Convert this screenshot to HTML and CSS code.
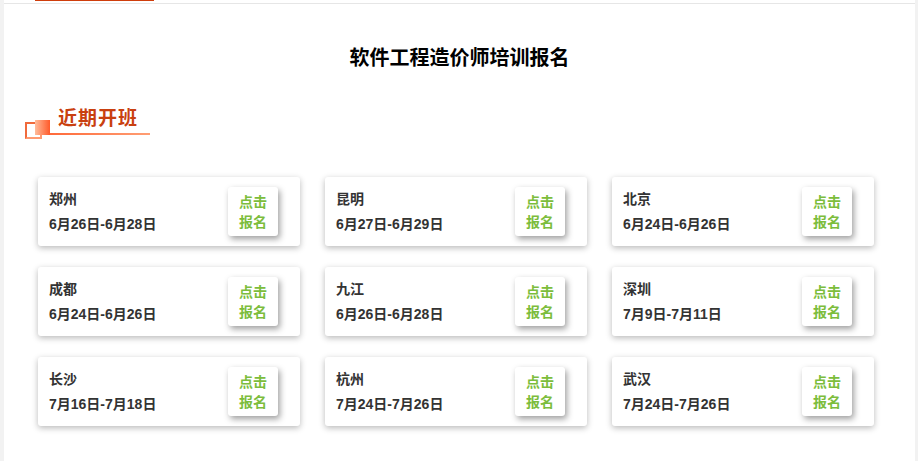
FILE: index.html
```html
<!DOCTYPE html>
<html lang="zh-CN">
<head>
<meta charset="utf-8">
<title>软件工程造价师培训报名</title>
<link rel="stylesheet" href="styles.css">
</head>
<body>
<div class="page">
  <div class="tabs"><span class="tab-active"></span></div>
  <h1 class="title">软件工程造价师培训报名</h1>
  <div class="section-head"><span class="section-text">近期开班</span></div>
  <div class="grid">
    <div class="card"><div class="info"><div class="city">郑州</div><div class="date">6月26日-6月28日</div></div><a class="btn">点击<br>报名</a></div>
    <div class="card"><div class="info"><div class="city">昆明</div><div class="date">6月27日-6月29日</div></div><a class="btn">点击<br>报名</a></div>
    <div class="card"><div class="info"><div class="city">北京</div><div class="date">6月24日-6月26日</div></div><a class="btn">点击<br>报名</a></div>
    <div class="card"><div class="info"><div class="city">成都</div><div class="date">6月24日-6月26日</div></div><a class="btn">点击<br>报名</a></div>
    <div class="card"><div class="info"><div class="city">九江</div><div class="date">6月26日-6月28日</div></div><a class="btn">点击<br>报名</a></div>
    <div class="card"><div class="info"><div class="city">深圳</div><div class="date">7月9日-7月11日</div></div><a class="btn">点击<br>报名</a></div>
    <div class="card"><div class="info"><div class="city">长沙</div><div class="date">7月16日-7月18日</div></div><a class="btn">点击<br>报名</a></div>
    <div class="card"><div class="info"><div class="city">杭州</div><div class="date">7月24日-7月26日</div></div><a class="btn">点击<br>报名</a></div>
    <div class="card"><div class="info"><div class="city">武汉</div><div class="date">7月24日-7月26日</div></div><a class="btn">点击<br>报名</a></div>
  </div>
</div>
</body>
</html>
```
FILE: styles.css
```css
html, body {
  margin: 0;
  padding: 0;
  background: #f2f2f2;
  font-family: "Liberation Sans", "Noto Sans CJK SC", sans-serif;
}

.page {
  margin-left: 4px;
  width: 911px;
  height: 461px;
  background: #fff;
  overflow: hidden;
}

.tabs {
  height: 3px;
  border-bottom: 1px solid #e6e6e6;
}

.tab-active {
  display: block;
  margin-left: 31px;
  width: 119px;
  height: 1px;
  background: #cf3d0c;
}

.title {
  margin: 40px 0 0;
  text-align: center;
  font-size: 20px;
  line-height: 28px;
  font-weight: bold;
  color: #000;
}

.section-head {
  position: relative;
  margin: 32px 0 0 21px;
  width: 125px;
  height: 36px;
}

.section-text {
  display: block;
  padding: 2px 0 0 33px;
  font-size: 19px;
  line-height: 26px;
  font-weight: bold;
  letter-spacing: 1px;
  color: #c9400f;
}

/* outlined square, filled square and the underline */
.section-head::before {
  content: "";
  position: absolute;
  left: 0;
  top: 18px;
  width: 13px;
  height: 13px;
  border: 2px solid #ff9a70;
  border-top-color: #f06a3c;
  border-left-color: #f06a3c;
}

.section-head::after {
  content: "";
  position: absolute;
  left: 10px;
  top: 16px;
  width: 115px;
  height: 16px;
  background:
    linear-gradient(90deg, #ff6a3a, #ff9e74) 15px 13px / 100px 2px no-repeat,
    linear-gradient(90deg, #ffbc9a, #ff5a2a) 0 0 / 15px 15px no-repeat;
}

.grid {
  display: grid;
  grid-template-columns: repeat(3, 262px);
  column-gap: 25px;
  row-gap: 21px;
  margin: 37px 0 0 34px;
}

.card {
  display: flex;
  justify-content: space-between;
  align-items: flex-start;
  height: 69px;
  box-sizing: border-box;
  padding: 10px 22px 0 11px;
  background: #fff;
  border-radius: 3px;
  box-shadow: 0 2px 6px rgba(0, 0, 0, 0.28);
}

.info {
  color: #333;
  font-weight: bold;
  font-size: 14px;
  line-height: 24px;
}

.date {
  margin-top: 1px;
}

.btn {
  display: block;
  width: 50px;
  height: 49px;
  box-sizing: border-box;
  padding-top: 5px;
  text-align: center;
  font-size: 14px;
  line-height: 20px;
  font-weight: bold;
  color: #7cbd3c;
  background: #fff;
  border-radius: 3px;
  box-shadow: 2px 3px 6px rgba(0, 0, 0, 0.38);
  cursor: pointer;
}
```
